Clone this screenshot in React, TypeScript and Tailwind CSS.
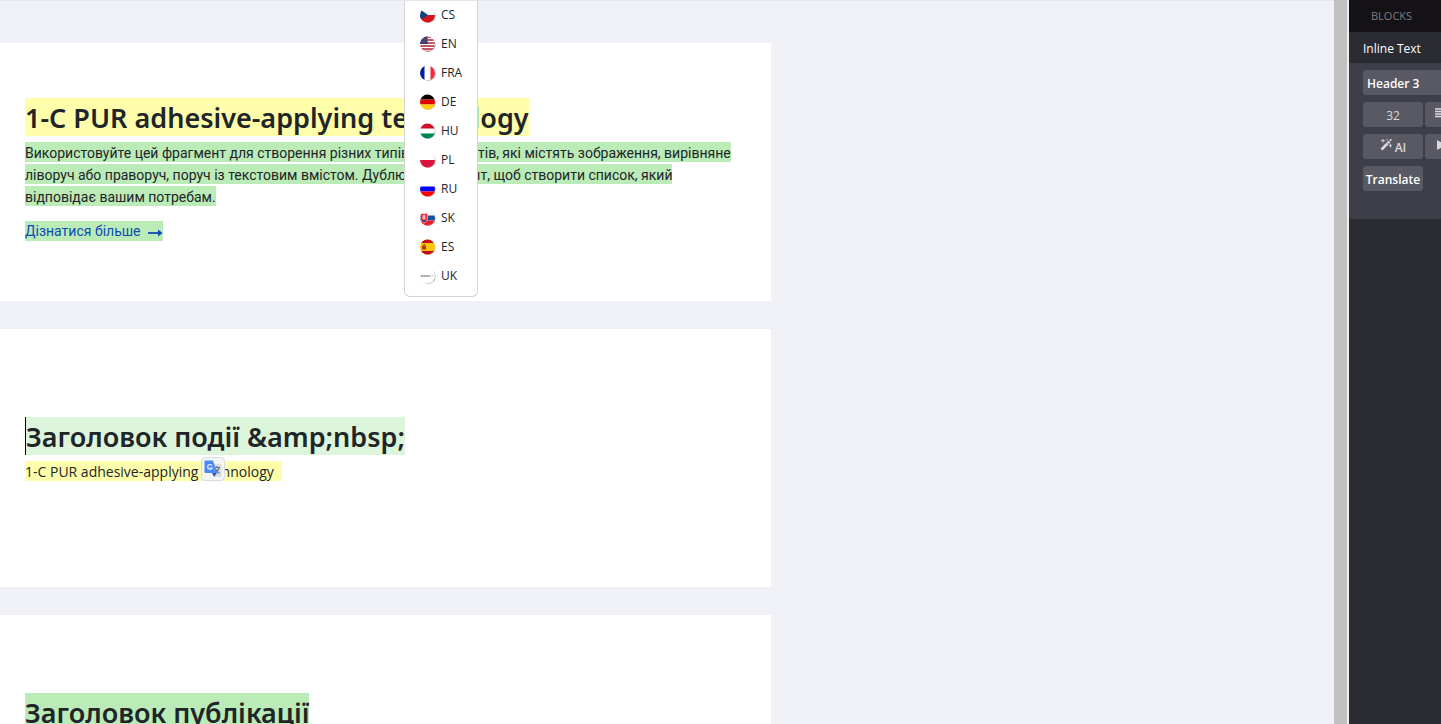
import type { ReactNode } from "react";

const flags: { code: string; art: ReactNode }[] = [
  {
    code: "CS",
    art: (
      <>
        <path d="M0 8h16v8H0z" fill="#d7141a" />
        <path d="M0 2l8.500 6L0 14z" fill="#11457e" />
      </>
    ),
  },
  {
    code: "EN",
    art: (
      <>
        <path d="M0 1h16M0 4h16M0 7h16M0 10h16M0 13h16M0 15.500h16" stroke="#b22234" strokeWidth="1.400" />
        <path d="M0 0h8v8H0z" fill="#3c3b6e" />
        <path d="M1 3h6M1 5.500h6" stroke="#8f8fae" strokeWidth=".7" strokeDasharray="1 1" />
      </>
    ),
  },
  {
    code: "FRA",
    art: (
      <>
        <path d="M0 0h5v16H0z" fill="#00209f" />
        <path d="M11 0h5v16h-5z" fill="#f42a41" />
      </>
    ),
  },
  {
    code: "DE",
    art: (
      <>
        <path d="M0 0h16v5.500H0z" fill="#000" />
        <path d="M0 5.500h16v5H0z" fill="#dd0000" />
        <path d="M0 10.500h16V16H0z" fill="#ffce00" />
      </>
    ),
  },
  {
    code: "HU",
    art: (
      <>
        <path d="M0 0h16v5.500H0z" fill="#ce1126" />
        <path d="M0 10.500h16V16H0z" fill="#008751" />
      </>
    ),
  },
  { code: "PL", art: <path d="M0 8h16v8H0z" fill="#dc143c" /> },
  {
    code: "RU",
    art: (
      <>
        <path d="M0 5.500h16v5H0z" fill="#0000f8" />
        <path d="M0 10.500h16V16H0z" fill="#ff0000" />
      </>
    ),
  },
  {
    code: "SK",
    art: (
      <>
        <path d="M0 5.500h16v5H0z" fill="#0b4ea2" />
        <path d="M0 10.500h16V16H0z" fill="#ee1c25" />
        <path d="M1 3.500h7v5c0 2-1.500 3.500-3.500 4.500C2.500 12 1 10.500 1 8.500z" fill="#ee1c25" stroke="#fff" strokeWidth=".6" />
        <path d="M4.500 4.500V10M3 6h3M2.500 8h4" stroke="#fff" strokeWidth=".9" />
        <path d="M2.500 11q2-2.500 4 0l-2 1.500z" fill="#0b4ea2" />
      </>
    ),
  },
  {
    code: "ES",
    art: (
      <>
        <path d="M0 0h16v16H0z" fill="#ffc400" />
        <path d="M0 0h16v4H0zM0 12h16v4H0z" fill="#c60b1e" />
        <path d="M2.500 6.500h4v4h-4z" fill="#ad3a20" />
        <path d="M4 5.500h1.500M3.500 8h1M5 9.500h1" stroke="#6b5a30" strokeWidth="1" />
      </>
    ),
  },
  {
    code: "UK",
    art: (
      <>
        <path d="M1 8h10" stroke="#777" strokeWidth="1.500" strokeDasharray="1.200 .4" />
        <path d="M13 7.500h1" stroke="#999" />
      </>
    ),
  },
];

function Flag({ code, art }: { code: string; art: ReactNode }) {
  return (
    <svg viewBox="0.5 0 16 16" className="size-4 shrink-0" aria-hidden="true">
      <defs>
        <clipPath id={`flag-${code}`}>
          <circle cx="8" cy="8" r="7.500" />
        </clipPath>
      </defs>
      <circle cx="8.700" cy="8.700" r="7.300" fill="#a5a5a5" />
      <g clipPath={`url(#flag-${code})`}>
        <path d="M0 0h16v16H0z" fill="#fff" />
        {art}
      </g>
    </svg>
  );
}

function LanguageMenu() {
  return (
    <nav
      aria-label="Language"
      className="absolute left-[404px] -top-px z-10 w-[74px] rounded-b-md border border-t-0 border-[#d3d4d6] bg-white pb-1.5"
    >
      <ul>
        {flags.map((flag) => (
          <li key={flag.code}>
            <a href="#" className="flex h-[29px] items-center gap-[5px] pl-[15px] text-xs text-[#212529]">
              <Flag {...flag} />
              {flag.code}
            </a>
          </li>
        ))}
      </ul>
    </nav>
  );
}

function Heading({ tone, children }: { tone: string; children: ReactNode }) {
  return (
    <h2
      className={`h-[38px] w-fit whitespace-nowrap font-['Noto_Sans',sans-serif] text-[27px] font-semibold leading-10 ${tone}`}
    >
      {children}
    </h2>
  );
}

function Line({ children }: { children: ReactNode }) {
  return <span className="block h-5 w-fit whitespace-nowrap bg-[#bbebb7]">{children}</span>;
}

function TranslateBadge() {
  return (
    <button
      aria-label="Translate selection"
      className="absolute left-[176px] -top-1 flex size-6 items-center justify-center rounded border border-[#d8dade] bg-[#f5f5f5]"
    >
      <svg viewBox="0 0 18 18" className="size-[18px]" aria-hidden="true">
        <path d="M8 4h8.500q1 0 1 1v11q0 1-1 1H11z" fill="#dcdcdc" />
        <path d="M10 7.500h6M13 6v1.500M15 7.500q-1 4-4.500 5.500M11.500 9q1.500 3 4 4.500" stroke="#697a80" strokeWidth="1.200" fill="none" />
        <path d="M1.500.5H9l4 12.500H1.500q-1 0-1-1V1.500q0-1 1-1z" fill="#4c8bf5" />
        <path d="M8 13h5l-3 4z" fill="#3558b8" />
        <path d="M8 5.500a2.400 2.400 0 1 0 .2 2.500H6" stroke="#e6efff" strokeWidth="1.200" fill="none" />
      </svg>
    </button>
  );
}

const toolButton = "flex h-[25px] items-center rounded-[3px] bg-[#595964] text-xs";

function Sidebar() {
  return (
    <aside className="w-[92px] shrink-0 overflow-hidden bg-[#2b2b33] text-[#d9d9d9]">
      <div className="flex h-8 items-center bg-[#141217] pl-[22px]">
        <button className="text-[11px] text-[#7b7a7f]">BLOCKS</button>
      </div>
      <h3 className="flex h-[31px] items-center whitespace-nowrap pl-3.5 pt-0.5 text-xs text-white">Inline Text</h3>
      <div className="flex h-[156px] flex-col gap-[7px] bg-[#3e3e48] pl-3.5 pt-[7px]">
        <button className={`${toolButton} w-[120px] whitespace-nowrap pl-1 pt-0.5 font-semibold text-white`}>Header 3</button>
        <div className="flex w-[140px] gap-0.5">
          <input
            aria-label="Font size"
            defaultValue="32"
            className={`${toolButton} w-[60px] pt-0.5 text-center outline-none`}
          />
          <button aria-label="Align" className={`${toolButton} w-[60px] pl-2.5`}>
            <svg viewBox="0 0 12 12" className="mb-1 size-3" aria-hidden="true">
              <path d="M0 2h12M0 4.500h12M0 7h12M0 9.500h12" stroke="#d9d9d9" strokeWidth="1.600" />
            </svg>
          </button>
        </div>
        <div className="flex w-[140px] gap-0.5">
          <button className={`${toolButton} w-[60px] justify-center gap-[3px] pt-0.5 font-semibold`}>
            <svg viewBox="0 0 12 12" className="mb-1.5 size-3" aria-hidden="true">
              <path d="M1.500 10.500L9.500 2.500" stroke="#d9d9d9" strokeWidth="2.600" />
              <path d="M6.800 3.300l2 2" stroke="#595964" strokeWidth=".7" />
              <path d="M3 0v3.500M1 1.700h4M7 0v1.500M10.500 5v3.500M8.800 6.700h3.200M10.500 0v2M9.500 1h2.500" stroke="#d9d9d9" strokeWidth=".9" />
            </svg>
            AI
          </button>
          <button aria-label="Animate" className={`${toolButton} w-[60px] pl-3`}>
            <svg viewBox="0 0 10 10" className="mb-1 size-2.5" aria-hidden="true">
              <path d="M0 0l9 5-9 5z" fill="#d9d9d9" />
            </svg>
          </button>
        </div>
        <button className={`${toolButton} w-[60px] justify-center pt-0.5 font-semibold text-white`}>Translate</button>
      </div>
    </aside>
  );
}

export default function App() {
  return (
    <div className="flex h-screen overflow-hidden bg-[#f0f1f6] font-['Open_Sans','Noto_Sans',sans-serif] text-[#212529]">
      <main className="relative min-w-0 flex-1 overflow-hidden border-t border-[#e4e6ea]">
        <LanguageMenu />
        <div className="flex w-[771px] max-w-full flex-col gap-7 pt-[42px]">
          <section className="h-[258px] shrink-0 bg-white pl-[25px] pt-[55px]">
            <Heading tone="bg-[#ffffab]">1-C PUR adhesive-applying technology</Heading>
            <p className="mt-1.5 flex flex-col gap-0.5 font-['Roboto',sans-serif] text-sm leading-[22px]">
              <Line>Використовуйте цей фрагмент для створення різних типів компонентів, які містять зображення, вирівняне</Line>
              <Line>ліворуч або праворуч, поруч із текстовим вмістом. Дублюйте елемент, щоб створити список, який</Line>
              <Line>відповідає вашим потребам.</Line>
            </p>
            <a
              href="#"
              className="mt-[15px] flex h-5 w-fit items-center gap-[7px] whitespace-nowrap bg-[#bbebb7] font-['Roboto',sans-serif] text-sm leading-[22px] text-[#0b4cb5]"
            >
              Дізнатися більше
              <svg viewBox="0 0 15 10" className="mt-1 h-2.5 w-[15px]" aria-hidden="true">
                <path d="M0 5h13" stroke="currentColor" strokeWidth="1.800" />
                <path d="M10 1.500L14.500 5 10 8.500z" fill="currentColor" />
              </svg>
            </a>
          </section>
          <section className="h-[258px] shrink-0 bg-white pl-[25px] pt-[88px]">
            <Heading tone="border-l border-black bg-[#dcf5db]">Заголовок події &amp;amp;nbsp;</Heading>
            <div className="relative mt-1.5 w-fit">
              <p className="h-5 whitespace-nowrap bg-[#ffffab] pr-2 text-sm leading-[22px]">1-C PUR adhesive-applying technology</p>
              <TranslateBadge />
            </div>
          </section>
          <section className="h-[258px] shrink-0 bg-white pl-[25px] pt-[78px]">
            <Heading tone="bg-[#bbebb7]">Заголовок публікації</Heading>
          </section>
        </div>
      </main>
      <div className="w-[15px] shrink-0 border-r-2 border-[#eeeeee] bg-[#c1c1c1]" />
      <Sidebar />
    </div>
  );
}
